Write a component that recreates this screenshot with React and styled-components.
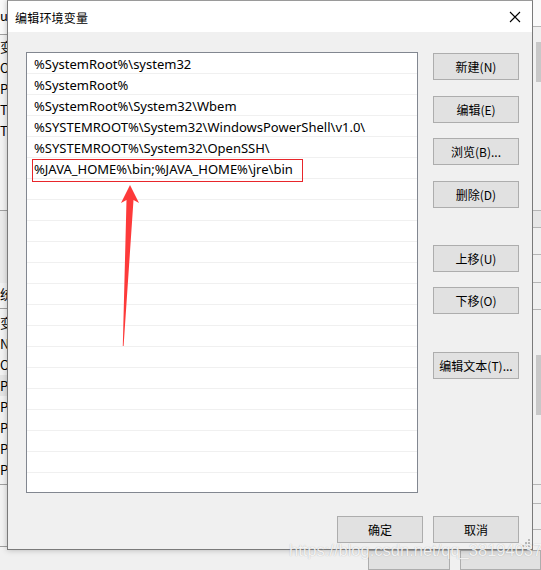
import React from "react";
import styled, { createGlobalStyle } from "styled-components";

const Global = createGlobalStyle`
  html, body { margin: 0; padding: 0; background: #f0f0f0; }
  body { font-family: "Noto Sans", "Noto Sans CJK SC", sans-serif; }
  * { box-sizing: border-box; }
`;

const CJK = `"Noto Sans CJK SC", "Noto Sans", sans-serif`;

const Desktop = styled.div`
  position: relative;
  width: 541px;
  height: 570px;
  overflow: hidden;
  background: #f0f0f0;
  display: flex;
  flex-direction: column;
`;

const TopRow = styled.div`
  display: flex;
  height: 563px;
`;

const LeftStrip = styled.div`
  width: 7px;
  flex: none;
  overflow: hidden;
  background: #f3f3f3;
  display: flex;
  flex-direction: column;
`;

const StripBlock = styled.div`
  height: ${(p) => p.h}px;
  flex: none;
  border-bottom: ${(p) => (p.line ? "1px solid #a0a0a0" : "none")};
  background: ${(p) => p.bg || "transparent"};
  padding-top: ${(p) => p.pt || 0}px;
  display: flex;
  flex-direction: column;
`;

const StripText = styled.div`
  height: 21px;
  line-height: 21px;
  font-size: 13px;
  font-family: ${CJK};
  color: #000;
  white-space: nowrap;
  background: ${(p) => (p.hl ? "#e5e5e5" : "transparent")};
`;

const RightStrip = styled.div`
  flex: 1;
  position: relative;
  background: #f0f0f0;
  display: flex;
  flex-direction: column;
`;

const RLine = styled.div`
  height: ${(p) => p.h}px;
  flex: none;
  border-bottom: 1px solid #b5b5b5;
  background: ${(p) => p.bg || "transparent"};
`;

const Thumb = styled.div`
  position: absolute;
  left: 3px;
  width: 5px;
  top: ${(p) => p.top}px;
  height: ${(p) => p.h}px;
  background: #c8c8c8;
`;

const Dialog = styled.div`
  width: 526px;
  flex: none;
  border: 1px solid #7a7a7a;
  border-top-color: #9a9a9a;
  background: #f0f0f0;
  display: flex;
  flex-direction: column;
  position: relative;
  box-shadow: 0 0 6px rgba(0, 0, 0, 0.25);
`;

const TitleBar = styled.div`
  height: 31px;
  background: #fff;
  display: flex;
  align-items: center;
  justify-content: space-between;
  padding: 0 9px 0 7px;
`;

const Title = styled.div`
  font-family: ${CJK};
  font-size: 12px;
  color: #000;
  letter-spacing: 0.2px;
  margin-top: 1px;
`;

const CloseBtn = styled.div`
  width: 16px;
  height: 16px;
  display: flex;
  align-items: center;
  justify-content: center;
`;

const Body = styled.div`
  flex: 1;
  display: flex;
  flex-direction: column;
  padding: 20px 13px 0 18px;
`;

const Main = styled.div`
  display: flex;
  gap: 15px;
`;

const ListBox = styled.div`
  position: relative;
  width: 392px;
  height: 441px;
  border: 1px solid #828790;
  background: #fff;
  overflow: hidden;
  display: flex;
  flex-direction: column;
`;

const Row = styled.div`
  position: relative;
  height: 21px;
  flex: none;
  border-bottom: 1px solid #f0f0f0;
  padding-left: 7px;
  padding-top: 1px;
  display: flex;
  align-items: center;
  font-family: "Noto Sans", sans-serif;
  font-size: 13px;
  color: #000;
  white-space: nowrap;
`;

const Mark = styled.div`
  position: absolute;
  left: 5px;
  top: 1px;
  width: 271px;
  height: 23px;
  border: 1px solid #e8262b;
`;

const ButtonCol = styled.div`
  display: flex;
  flex-direction: column;
  padding-top: 1px;
`;

const Btn = styled.button`
  width: 86px;
  height: 27px;
  margin-top: ${(p) => p.mt || 0}px;
  background: #e1e1e1;
  border: 1px solid #adadad;
  border-radius: 0;
  font-family: ${CJK};
  font-size: 12px;
  color: #000;
  padding: 0;
  display: flex;
  align-items: center;
  justify-content: center;
  flex: none;
`;

const Footer = styled.div`
  display: flex;
  justify-content: flex-end;
  gap: 10px;
  margin-top: 23px;
`;

const Arrow = styled.svg`
  position: absolute;
  left: 0;
  top: 0;
  pointer-events: none;
`;

const Watermark = styled.div`
  position: absolute;
  left: 289px;
  top: 541px;
  font-family: "Liberation Sans", Arial, sans-serif;
  font-size: 16.5px;
  color: rgba(255, 255, 255, 0.85);
  text-shadow: 0 0 1px rgba(0, 0, 0, 0.28);
  white-space: nowrap;
`;

const Grip = styled.svg`
  position: absolute;
  right: 2px;
  bottom: 2px;
`;

const BottomStrip = styled.div`
  flex: 1;
  display: flex;
  padding-left: 368px;
  gap: 10px;
`;

const PartialBtn = styled.div`
  width: 86px;
  height: 20px;
  background: #e1e1e1;
  border: 1px solid #adadad;
`;

const paths = [
  "%SystemRoot%\\system32",
  "%SystemRoot%",
  "%SystemRoot%\\System32\\Wbem",
  "%SYSTEMROOT%\\System32\\WindowsPowerShell\\v1.0\\",
  "%SYSTEMROOT%\\System32\\OpenSSH\\",
  "%JAVA_HOME%\\bin;%JAVA_HOME%\\jre\\bin",
];

const rows = Array.from({ length: 21 }, (_, i) => paths[i] || "");

export default function App() {
  return (
    <>
      <Global />
      <Desktop>
        <TopRow>
          <LeftStrip>
            <StripBlock h={35} line pt={5} bg="#fafafa">
              <StripText>ux</StripText>
            </StripBlock>
            <StripBlock h={176} line pt={1}>
              <StripText>变</StripText>
              <StripText>O</StripText>
              <StripText>Pa</StripText>
              <StripText>TE</StripText>
              <StripText>TM</StripText>
            </StripBlock>
            <StripBlock h={72} pt={0} bg="#ebebeb" />
            <StripBlock h={26} line pt={0}>
              <StripText>统</StripText>
            </StripBlock>
            <StripBlock h={176} line pt={3}>
              <StripText>变</StripText>
              <StripText>N</StripText>
              <StripText>O</StripText>
              <StripText hl>Pa</StripText>
              <StripText>PA</StripText>
              <StripText>PR</StripText>
              <StripText>PR</StripText>
              <StripText>PR</StripText>
            </StripBlock>
            <StripBlock h={62} line />
          </LeftStrip>

          <Dialog>
            <TitleBar>
              <Title>编辑环境变量</Title>
              <CloseBtn>
                <svg width="12" height="12" viewBox="0 0 12 12">
                  <path d="M1 1 L11 11 M11 1 L1 11" stroke="#000" strokeWidth="1.1" fill="none" />
                </svg>
              </CloseBtn>
            </TitleBar>
            <Body>
              <Main>
                <ListBox>
                  {rows.map((t, i) => (
                    <Row key={i}>
                      {t}
                      {i === 5 && <Mark />}
                    </Row>
                  ))}
                </ListBox>
                <ButtonCol>
                  <Btn>新建(N)</Btn>
                  <Btn mt={16}>编辑(E)</Btn>
                  <Btn mt={15}>浏览(B)...</Btn>
                  <Btn mt={16}>删除(D)</Btn>
                  <Btn mt={37}>上移(U)</Btn>
                  <Btn mt={15}>下移(O)</Btn>
                  <Btn mt={38}>编辑文本(T)...</Btn>
                </ButtonCol>
              </Main>
              <Footer>
                <Btn>确定</Btn>
                <Btn>取消</Btn>
              </Footer>
            </Body>
            <Grip width="8" height="8" viewBox="0 0 8 8">
              <rect x="6" y="0" width="2" height="2" fill="#b8b8b8" />
              <rect x="3" y="3" width="2" height="2" fill="#b8b8b8" />
              <rect x="6" y="3" width="2" height="2" fill="#b8b8b8" />
              <rect x="0" y="6" width="2" height="2" fill="#b8b8b8" />
              <rect x="3" y="6" width="2" height="2" fill="#b8b8b8" />
              <rect x="6" y="6" width="2" height="2" fill="#b8b8b8" />
            </Grip>
          </Dialog>

          <RightStrip>
            <RLine h={27} bg="#fafafa" />
            <RLine h={184} />
            <RLine h={17} bg="#e6e6e6" />
            <RLine h={27} />
            <RLine h={28} />
            <RLine h={27} />
            <RLine h={175} />
            <RLine h={19} />
            <RLine h={26} />
            <Thumb top={42} h={40} />
            <Thumb top={355} h={60} />
          </RightStrip>
        </TopRow>
        <BottomStrip>
          <PartialBtn />
          <PartialBtn />
        </BottomStrip>

        <Arrow width="541" height="570" viewBox="0 0 541 570">
          <polygon
            points="130,185 139,203 133.5,200 123.6,346 122.8,346 126.5,200 121,203"
            fill="#fd3a3a"
          />
        </Arrow>
        <Watermark>https://blog.csdn.net/qq_38194037</Watermark>
      </Desktop>
    </>
  );
}
